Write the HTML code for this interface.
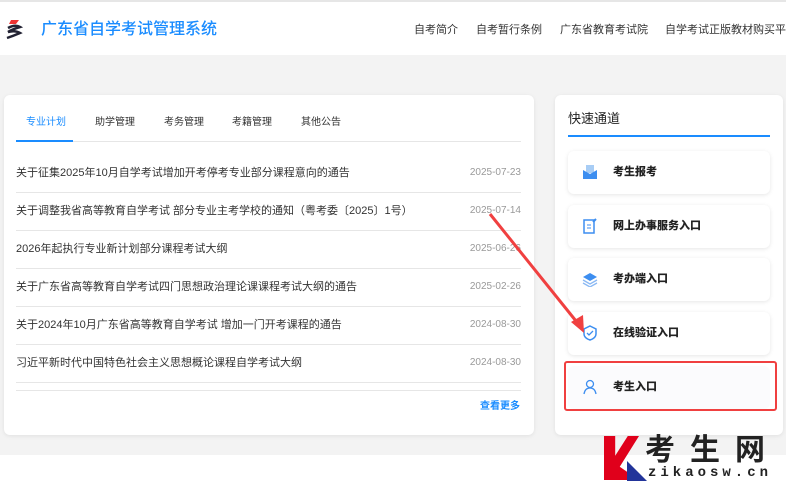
<!DOCTYPE html>
<html><head><meta charset="utf-8"><style>
*{margin:0;padding:0;box-sizing:border-box}
body{width:786px;height:493px;overflow:hidden;background:#fff;font-family:"Liberation Sans","Noto Sans CJK SC",sans-serif;position:relative}
.hdr{position:absolute;left:0;top:0;width:786px;height:55px;background:#fff;border-top:2px solid #e6e6e6;box-shadow:0 2px 4px rgba(0,0,0,.06)}
.title{position:absolute;left:41px;top:18px;font-size:16px;line-height:20px;color:#1a8cff;font-weight:500}
.nav{position:absolute;top:21px;font-size:11px;line-height:14px;color:#333;white-space:nowrap}
.bg{position:absolute;left:0;top:55px;width:786px;height:400px;background:#f3f3f3}
.card{position:absolute;background:#fff;border-radius:6px;box-shadow:0 1px 4px rgba(0,0,0,.08)}
.tab{position:absolute;top:117px;font-size:10px;line-height:12px;color:#333}
.row{position:absolute;left:16px;width:505px;font-size:11px;line-height:14px;color:#333}
.row span{position:absolute;right:0;top:0;color:#999;font-size:10px;line-height:14px}
.line{position:absolute;left:16px;width:505px;height:1px;background:#e6e6e6}
.qb{position:absolute;left:568px;width:202px;height:43px;background:#fff;border-radius:6px;box-shadow:0 1px 4px rgba(0,0,0,.1);font-size:11px;line-height:14px;color:#222;font-weight:bold}
.qb b{position:absolute;left:45px;top:14px}
.qb svg{position:absolute;left:14px;top:13px}
</style></head><body>
<div class="hdr">
<svg style="position:absolute;left:3px;top:16px" width="22" height="24" viewBox="0 0 22 24"><path d="M8 2 L16 2 L13 6 L6 6Z" fill="#e33"/><path d="M5 10 Q12 6 17 9 Q10 11 5 14 Q12 12 17 15 Q10 18 4 20" stroke="#223" stroke-width="2.5" fill="none"/></svg>
<div class="title">广东省自学考试管理系统</div>
<div class="nav" style="left:414px">自考简介</div>
<div class="nav" style="left:476px">自考暂行条例</div>
<div class="nav" style="left:560px">广东省教育考试院</div>
<div class="nav" style="left:665px">自学考试正版教材购买平台</div>
</div>
<div class="bg"></div>
<div class="card" style="left:4px;top:95px;width:530px;height:340px"></div>
<div class="tab" style="left:26px;color:#1a8cff">专业计划</div>
<div class="tab" style="left:95px">助学管理</div>
<div class="tab" style="left:164px">考务管理</div>
<div class="tab" style="left:232px">考籍管理</div>
<div class="tab" style="left:301px">其他公告</div>
<div class="line" style="top:141px"></div>
<div style="position:absolute;left:16px;top:140px;width:57px;height:2px;background:#1a8cff"></div>
<div class="row" style="top:166px">关于征集2025年10月自学考试增加开考停考专业部分课程意向的通告<span>2025-07-23</span></div>
<div class="line" style="top:192px"></div>
<div class="row" style="top:204px">关于调整我省高等教育自学考试 部分专业主考学校的通知（粤考委〔2025〕1号）<span>2025-07-14</span></div>
<div class="line" style="top:230px"></div>
<div class="row" style="top:242px">2026年起执行专业新计划部分课程考试大纲<span>2025-06-26</span></div>
<div class="line" style="top:268px"></div>
<div class="row" style="top:280px">关于广东省高等教育自学考试四门思想政治理论课课程考试大纲的通告<span>2025-02-26</span></div>
<div class="line" style="top:306px"></div>
<div class="row" style="top:318px">关于2024年10月广东省高等教育自学考试 增加一门开考课程的通告<span>2024-08-30</span></div>
<div class="line" style="top:344px"></div>
<div class="row" style="top:356px">习近平新时代中国特色社会主义思想概论课程自学考试大纲<span>2024-08-30</span></div>
<div class="line" style="top:382px"></div>
<div class="line" style="top:390px"></div>
<div style="position:absolute;left:480px;top:401px;font-size:10px;line-height:12px;color:#1a8cff;font-weight:bold">查看更多</div>

<div class="card" style="left:555px;top:95px;width:228px;height:340px"></div>
<div style="position:absolute;left:568px;top:111px;font-size:13px;line-height:16px;color:#222">快速通道</div>
<div style="position:absolute;left:568px;top:135px;width:202px;height:2px;background:#1a8cff"></div>
<div class="qb" style="top:151px"><svg width="16" height="16" viewBox="0 0 16 16"><rect x="4" y="1" width="8" height="8" fill="#a8cdf5"/><path d="M1 6 L8 10 L15 6 V15 H1Z" fill="#3d8ef0"/></svg><b>考生报考</b></div>
<div class="qb" style="top:205px"><svg width="16" height="16" viewBox="0 0 16 16"><rect x="2" y="2" width="10" height="13" fill="none" stroke="#3d8ef0" stroke-width="1.5"/><path d="M5 7h4M5 10h4" stroke="#3d8ef0"/><path d="M11 4l3-3" stroke="#3d8ef0" stroke-width="2"/></svg><b>网上办事服务入口</b></div>
<div class="qb" style="top:258px"><svg width="16" height="16" viewBox="0 0 16 16"><path d="M8 2L15 6 8 10 1 6Z" fill="#3d8ef0"/><path d="M1 9l7 4 7-4M1 12l7 4 7-4" stroke="#8ab8f3" fill="none" stroke-width="1.3"/></svg><b>考办端入口</b></div>
<div class="qb" style="top:312px"><svg width="16" height="16" viewBox="0 0 16 16"><path d="M8 1L14 4V9Q14 13 8 15Q2 13 2 9V4Z" fill="none" stroke="#3d8ef0" stroke-width="1.5"/><path d="M5 8l2 2 4-4" stroke="#3d8ef0" fill="none" stroke-width="1.3"/></svg><b>在线验证入口</b></div>
<div class="qb" style="top:366px;box-shadow:none;background:#fbfbfd"><svg width="16" height="16" viewBox="0 0 16 16"><circle cx="8" cy="5" r="3.5" fill="none" stroke="#3d8ef0" stroke-width="1.3"/><path d="M2 15Q3 9 8 9Q13 9 14 15" fill="none" stroke="#3d8ef0" stroke-width="1.3"/></svg><b>考生入口</b></div>
<div style="position:absolute;left:564px;top:361px;width:213px;height:50px;border:2px solid #f04040;border-radius:3px"></div>
<svg style="position:absolute;left:0;top:0" width="786" height="493"><path d="M490 214 L580 326" stroke="#f04040" stroke-width="3"/><path d="M584 333 L571 322 L583 315Z" fill="#f04040"/></svg>
<div style="position:absolute;left:604px;top:436px;width:35px;height:44px;background:#e0001b;clip-path:polygon(0 0,32% 0,32% 45%,68% 0,100% 0,45% 70%,100% 100%,0 100%)"></div>
<div style="position:absolute;left:627px;top:461px;width:20px;height:20px;background:#22349a;clip-path:polygon(0 0,0 100%,100% 100%)"></div>
<div style="position:absolute;left:645px;top:430px;font-size:30px;line-height:34px;font-weight:bold;color:#222;letter-spacing:15px;font-family:'Noto Sans CJK SC',sans-serif">考生网</div>
<div style="position:absolute;left:648px;top:465px;font-size:14px;line-height:16px;font-weight:bold;color:#222;letter-spacing:4px;font-family:'Liberation Mono',monospace">zikaosw.cn</div>
</body></html>
